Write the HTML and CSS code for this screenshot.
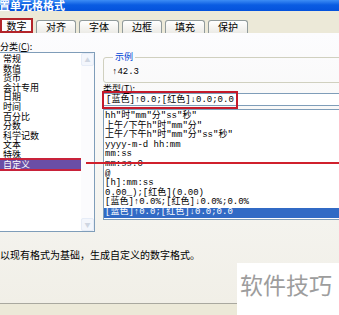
FILE: index.html
```html
<!DOCTYPE html>
<html lang="zh-CN">
<head>
    <meta charset="UTF-8">
    <title>设置单元格格式</title>
    <link rel="stylesheet" href="styles.css">
</head>
<body>
    <div class="dialog">
        <div class="titlebar"><span>设置单元格格式</span></div>

        <!-- Tab strip -->
        <div class="tabs">
            <div class="tab active">数字</div>
            <div class="tab">对齐</div>
            <div class="tab">字体</div>
            <div class="tab">边框</div>
            <div class="tab">填充</div>
            <div class="tab">保护</div>
        </div>

        <div class="panel">
            <div class="main">
                <!-- Category list -->
                <div class="category">
                    <div class="label">分类(<u>C</u>):</div>
                    <div class="listbox">
                        <ul class="items">
                            <li>常规</li>
                            <li>数值</li>
                            <li>货币</li>
                            <li>会计专用</li>
                            <li>日期</li>
                            <li>时间</li>
                            <li>百分比</li>
                            <li>分数</li>
                            <li>科学记数</li>
                            <li>文本</li>
                            <li>特殊</li>
                            <li class="selected">自定义</li>
                        </ul>
                        <div class="scrollbar">
                            <div class="sbtn">&#9650;</div>
                            <div class="sbtn">&#9660;</div>
                        </div>
                    </div>
                </div>

                <!-- Format details -->
                <div class="details">
                    <fieldset class="sample">
                        <legend>示例</legend>
                        <div class="sample-value">↑42.3</div>
                    </fieldset>
                    <div class="label">类型(<u>T</u>):</div>
                    <div class="type-input"><span class="mark">[蓝色]↑0.0;[红色]↓0.0;0.0</span></div>
                    <ul class="type-list">
                        <li>hh"时"mm"分"ss"秒"</li>
                        <li>上午/下午h"时"mm"分"</li>
                        <li>上午/下午h"时"mm"分"ss"秒"</li>
                        <li>yyyy-m-d hh:mm</li>
                        <li>mm:ss</li>
                        <li>mm:ss.0</li>
                        <li>@</li>
                        <li>[h]:mm:ss</li>
                        <li>0.00_);[红色](0.00)</li>
                        <li>[蓝色]↑0.0%;[红色]↓0.0%;0.0%</li>
                        <li class="selected">[蓝色]↑0.0;[红色]↓0.0;0.0</li>
                    </ul>
                </div>
            </div>

            <p class="desc">以现有格式为基础，生成自定义的数字格式。</p>
        </div>

        <!-- Annotation line and watermark -->
        <div class="pointer"></div>
        <div class="watermark">软件技巧</div>
    </div>
</body>
</html>
```

FILE: styles.css
```css
body {
    margin: 0;
    width: 339px;
    height: 315px;
    overflow: hidden;
    background: #ece9d8;
    font-family: "Noto Sans CJK SC", sans-serif;
    color: #000;
}

.dialog {
    position: relative;
    height: 315px;
    overflow: hidden;
}

.titlebar {
    height: 11px;
    background: linear-gradient(#3d8df5, #0a5ce2 45%, #0452dc);
    color: #fff;
    font-weight: bold;
    font-size: 11px;
    line-height: 11px;
    white-space: nowrap;
    overflow: hidden;
}

.titlebar span {
    display: block;
    margin-left: -12px;
}

.tabs {
    display: flex;
    align-items: flex-end;
    gap: 3px;
    height: 22px;
}

.tab {
    box-sizing: border-box;
    width: 40px;
    height: 13px;
    border: 1px solid #919b9c;
    border-bottom: none;
    border-radius: 3px 3px 0 0;
    background: linear-gradient(#ffffff, #ecebe6);
    font-size: 10px;
    line-height: 12px;
    text-align: center;
}

.tab.active {
    width: 33px;
    height: 15px;
    border: 2px solid #b3242a;
    border-radius: 0;
    background: #fcfcfe;
    line-height: 12px;
}

.panel {
    box-sizing: border-box;
    height: 271px;
    padding-top: 8px;
    background: linear-gradient(#fcfcfe, #f4f3ee 70%, #f1efe7);
    border-bottom: 1px solid #a9a89f;
}

.main {
    display: flex;
    align-items: flex-start;
}

.label {
    font-size: 9px;
    line-height: 11px;
}

.category {
    width: 95px;
}

.listbox {
    box-sizing: border-box;
    display: flex;
    height: 180px;
    margin-left: -1px;
    border: 1px solid #7f9db9;
    background: #fff;
}

.items {
    flex: 1;
    margin: 0;
    padding: 1px 0 0;
    list-style: none;
    font-size: 9px;
    line-height: 9.6px;
}

.items li {
    padding-left: 3px;
    white-space: nowrap;
}

.items li.selected {
    margin-right: -3px;
    background: #6a4ea6;
    color: #fff;
    outline: 2px solid #c8223a;
}

.scrollbar {
    width: 13px;
    display: flex;
    flex-direction: column;
    justify-content: space-between;
    background: #fbfbfd;
}

.sbtn {
    box-sizing: border-box;
    height: 13px;
    border: 1px solid #e6ecf7;
    border-radius: 2px;
    background: #f3f6fc;
    color: #cfd6e2;
    font-size: 6px;
    line-height: 11px;
    text-align: center;
}

.details {
    flex: 1;
    margin-left: 8px;
    margin-right: -3px;
    padding-top: 11px;
}

.sample {
    margin: 0;
    padding: 5px 8px 5px;
    border: 1px solid #d0d0bf;
    border-radius: 3px;
}

.sample legend {
    margin-left: 1px;
    padding: 0 2px;
    font-size: 9px;
    line-height: 10px;
    color: #0046d5;
}

.sample-value,
.type-input,
.type-list {
    font-family: "Liberation Mono", "Noto Sans CJK SC", monospace;
    font-size: 9px;
    line-height: 10px;
}

.details .label {
    margin-top: 1px;
    line-height: 9px;
}

.type-input {
    box-sizing: border-box;
    height: 13px;
    padding: 1px 0 0 2px;
    border: 1px solid #7f9db9;
    background: #fff;
    line-height: 10px;
    white-space: nowrap;
}

.mark {
    display: inline-block;
    outline: 2px solid #c41a2a;
    outline-offset: 2px;
}

.type-list {
    box-sizing: border-box;
    height: 111px;
    margin: 3px 0 0;
    padding: 2px 0 0;
    list-style: none;
    border: 1px solid #7f9db9;
    background: #fff;
    line-height: 9.6px;
}

.type-list li {
    padding-left: 1px;
    white-space: nowrap;
}

.type-list li.selected {
    background: #316ac5;
    color: #fff;
}

.desc {
    margin: 17px 0 0;
    font-size: 10px;
    line-height: 12px;
    white-space: nowrap;
}

.pointer {
    position: absolute;
    left: 86px;
    top: 162px;
    width: 260px;
    height: 2px;
    background: #d0202c;
}

.watermark {
    position: absolute;
    left: 237px;
    top: 263px;
    width: 110px;
    height: 60px;
    padding: 7px 0 0 3px;
    box-sizing: border-box;
    background: #fff;
    color: #9d9d9d;
    font-size: 23px;
    line-height: 28px;
    white-space: nowrap;
}
```
